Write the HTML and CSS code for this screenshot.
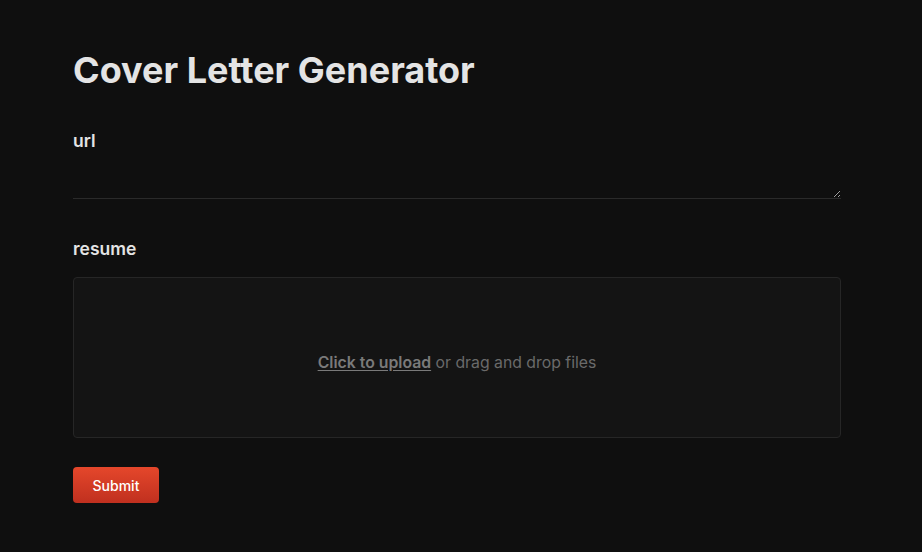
FILE: index.html
```html
<!DOCTYPE html>
<html>
<head>
<meta charset="utf-8">
<link rel="stylesheet" href="styles.css">
</head>
<body>
<main class="page">
  <h1 class="title">Cover Letter Generator</h1>
  <form class="form">
    <div class="field">
      <label class="label" for="url">url</label>
      <textarea id="url" class="textarea"></textarea>
    </div>
    <div class="field">
      <label class="label">resume</label>
      <div class="dropzone">
        <span class="drop-text"><span class="drop-link">Click to upload</span> or drag and drop files</span>
      </div>
    </div>
    <div class="actions">
      <button type="button" class="submit">Submit</button>
    </div>
  </form>
</main>
</body>
</html>
```

FILE: styles.css
```css
* { box-sizing: border-box; }
html, body {
  margin: 0;
  background: #0f0f0f;
  height: 100%;
}
body {
  font-family: Inter, "Noto Sans", sans-serif;
  color: #e5e5e5;
}
.page {
  padding: 48px 81px 0 73px;
  width: 922px;
}
.title {
  margin: 0;
  font-size: 36px;
  font-weight: 700;
  line-height: 44px;
  color: #e4e4e4;
}
.form {
  margin-top: 37px;
  display: flex;
  flex-direction: column;
}
.field {
  display: flex;
  flex-direction: column;
  margin-bottom: 38px;
}
.label {
  font-size: 17.5px;
  font-weight: 600;
  line-height: 24px;
  color: #e4e4e4;
}
.textarea {
  margin-top: 10px;
  height: 36px;
  background: transparent;
  border: none;
  border-bottom: 1px solid #2a2a2a;
  color: #e5e5e5;
  font-family: inherit;
  font-size: 16px;
  outline: none;
  resize: vertical;
  padding: 6px 0;
}
.dropzone {
  margin-top: 16px;
  height: 161px;
  padding-top: 10px;
  border: 1px solid #262626;
  border-radius: 4px;
  background: #141414;
  display: flex;
  align-items: center;
  justify-content: center;
}
.drop-text {
  font-size: 15.8px;
  color: #6a6a6a;
}
.drop-link {
  font-weight: 600;
  color: #7a7a7a;
  text-decoration: underline;
  text-underline-offset: 2px;
}
.actions {
  margin-top: -9px;
}
.submit {
  width: 86px;
  height: 36px;
  border: none;
  border-radius: 4px;
  background: linear-gradient(#e5472b, #c0301f);
  color: #ffffff;
  font-family: inherit;
  font-size: 14px;
  font-weight: 500;
}
```
